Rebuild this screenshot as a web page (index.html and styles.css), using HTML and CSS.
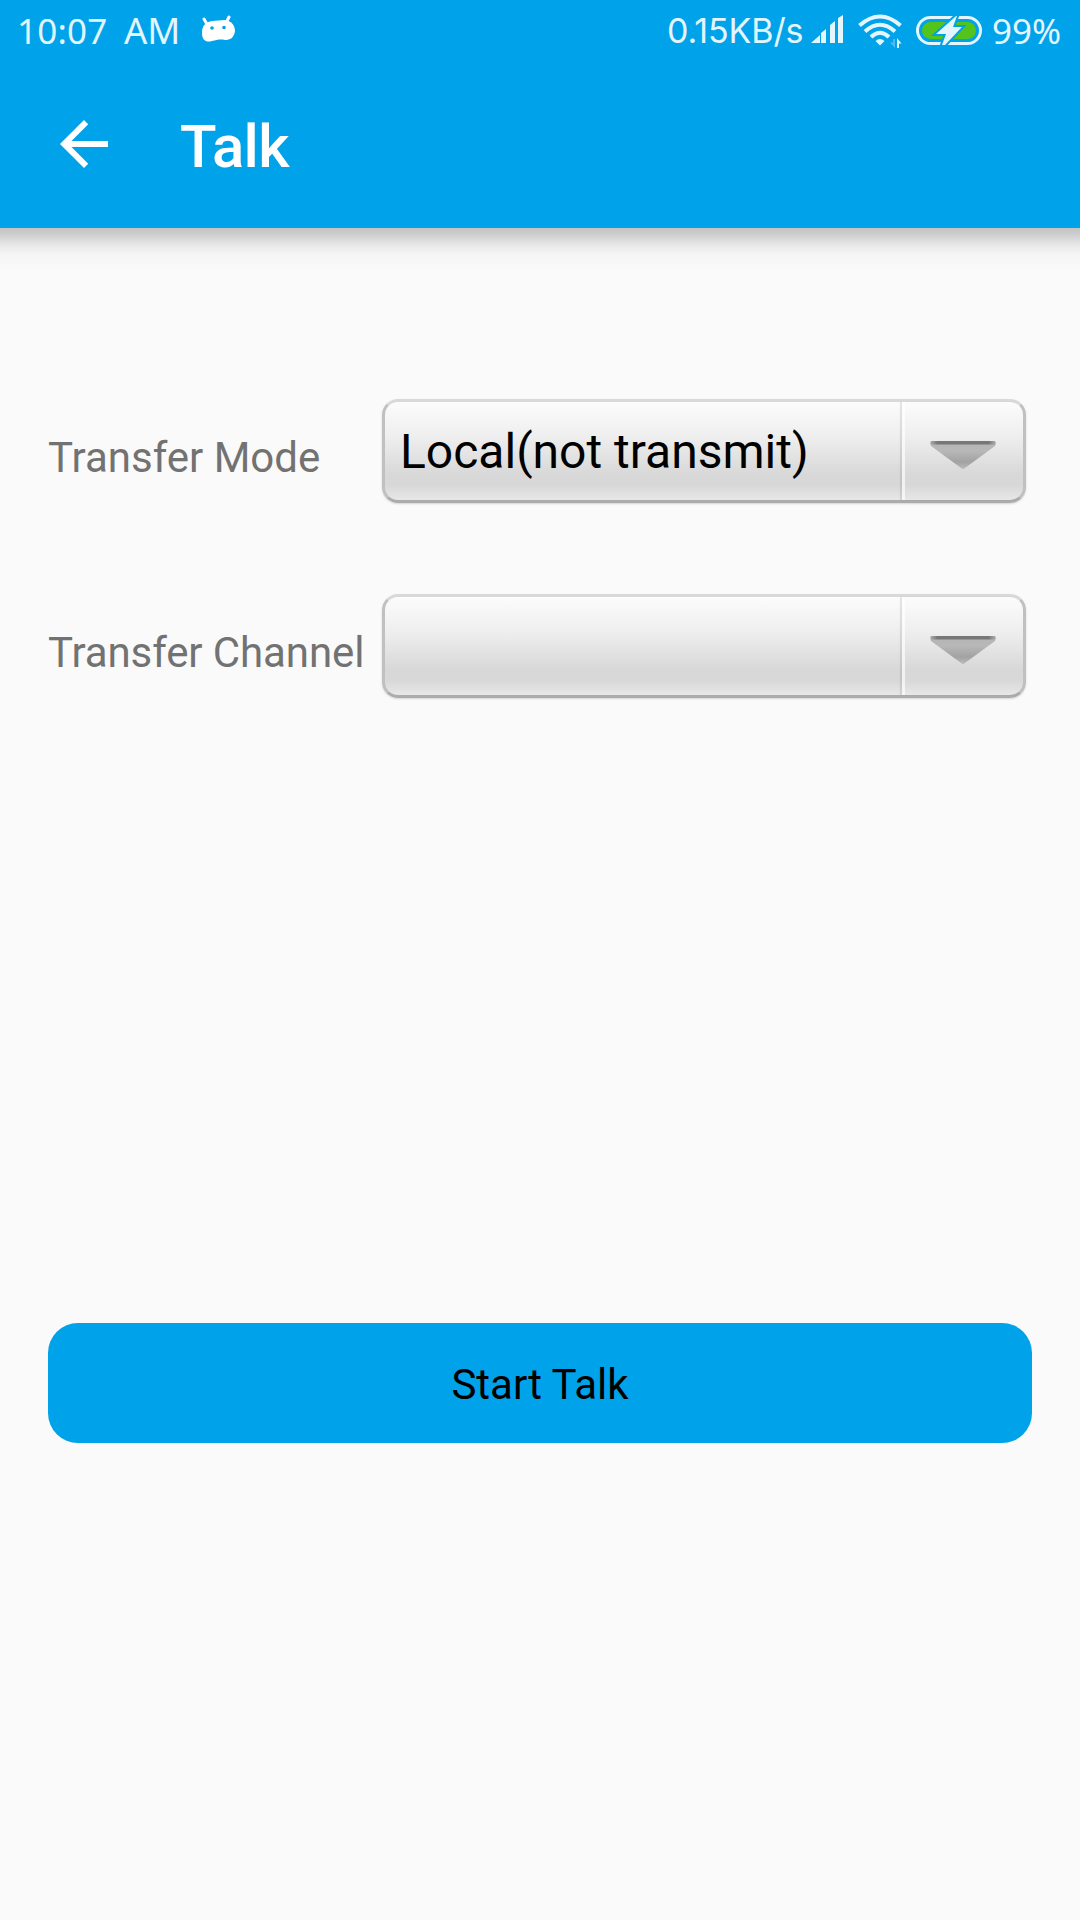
FILE: index.html
```html
<!DOCTYPE html>
<html lang="en">
<head>
<meta charset="utf-8">
<title>Talk</title>
<link rel="stylesheet" href="styles.css">
</head>
<body>
<header class="header">
  <div class="status">
    <span class="time">10:07</span>
    <span class="ampm">AM</span>
    <svg class="android" width="36" height="28" viewBox="0 0 36 28">
      <path d="M4 4l4 7M29 2l-3 6" stroke="#fff" stroke-width="3" stroke-linecap="round"/>
      <path d="M2 18C2 10 6 7 12 6L25 5C32 6 35 11 35 16C34 23 30 25 25 25C20 24 17 25 12 26C6 28 2 25 2 18Z" fill="#fff"/>
      <circle cx="12" cy="13" r="1.8" fill="#00a2e9"/><circle cx="24" cy="12.500" r="1.800" fill="#00a2e9"/>
    </svg>
    <span class="speed">0.15KB/s</span>
    <svg class="signal" width="33" height="29" viewBox="0 0 33 29">
      <path d="M0 28L9 20V28ZM10 28V18L15 14V28ZM19 28V10L24 6V28ZM27 28V3L32 0V28Z" fill="#e3f5fd"/>
    </svg>
    <svg class="wifi" width="44" height="36" viewBox="0 0 44 36">
      <g fill="none" stroke="#e3f5fd" stroke-width="4">
        <path d="M1.500 11.500Q22-6.500 42.500 11.500"/><path d="M7 17.500Q22 4 37 17.500"/><path d="M13 23Q22 14.500 31 23"/>
      </g>
      <path d="M17.500 27Q22 23 26.500 27L22 31.500Z" fill="#e3f5fd"/>
      <path d="M37 25V34L32 28.500H35V25Z" fill="#4abdf0"/><path d="M39 34V24L43.500 29.500H41V34Z" fill="#e3f5fd"/>
    </svg>
    <svg class="battery" width="66" height="30" viewBox="0 0 66 30">
      <rect x="1.500" y="2.500" width="63" height="26" rx="13" fill="none" stroke="#e3f5fd" stroke-width="3"/>
      <rect x="6" y="7" width="54" height="17" rx="8.500" fill="#54c41c"/>
      <path d="M40 1L20 19H30L26 30H29L46 12H37L41 1Z" fill="#e3f5fd" stroke="#00a2e9" stroke-width="4" paint-order="stroke"/>
    </svg>
    <span class="percent">99%</span>
  </div>
  <div class="toolbar">
    <svg class="back" width="72" height="72" viewBox="0 0 24 24"><path d="M20 11H7.830l5.590-5.590L12 4l-8 8 8 8 1.410-1.410L7.830 13H20z" fill="#fff"/></svg>
    <h1 class="title">Talk</h1>
  </div>
</header>
<main class="content">
  <div class="row">
    <span class="label">Transfer Mode</span>
    <div class="spinner">
      <span class="value">Local(not transmit)</span>
      <span class="drop"><svg class="caret" width="68" height="30" viewBox="0 0 68 30"><use href="#caret"/></svg></span>
    </div>
  </div>
  <div class="row">
    <span class="label channel">Transfer Channel</span>
    <div class="spinner">
      <span class="value"></span>
      <span class="drop"><svg class="caret" width="68" height="30" viewBox="0 0 68 30">
        <defs>
          <linearGradient id="fill" x1="0" y1="0" x2="0" y2="1"><stop offset="0" stop-color="#b4b4b4"/><stop offset=".35" stop-color="#b8b8b8"/><stop offset=".75" stop-color="#a2a2a2"/><stop offset="1" stop-color="#bcbcbc"/></linearGradient>
          <linearGradient id="edge"><stop offset="0" stop-color="#a8a8a8"/><stop offset=".1" stop-color="#777"/><stop offset=".9" stop-color="#777"/><stop offset="1" stop-color="#a8a8a8"/></linearGradient>
          <g id="caret"><path d="M1 2Q1 0 4 0H64Q67 0 67 2L66 5L36 27Q34 29 32 27L2 5Z" fill="url(#fill)"/><path d="M2 0H66V3.500H2Z" fill="url(#edge)"/></g>
        </defs>
        <use href="#caret"/></svg></span>
    </div>
  </div>
  <button class="start">Start Talk</button>
</main>
</body>
</html>
```
FILE: styles.css
```css
* { box-sizing: border-box; }
body { margin: 0; width: 1080px; height: 1920px; background: #fafafa; font-family: Roboto, sans-serif; overflow: hidden; }
.header { position: relative; height: 228px; background: #00a2e9; }
.header::after { content: ""; position: absolute; top: 100%; left: 0; right: 0; height: 42px; background: linear-gradient(#c4c4c4 0, #cdcdcd 6px, #dedede 13px, #ebebeb 19px, #f5f5f5 26px, #fafafa 42px); }
.status { height: 60px; display: flex; align-items: flex-start; color: #e3f5fd; font-family: "Noto Sans", sans-serif; font-size: 35px; line-height: 62px; white-space: nowrap; }
.status svg { flex: none; }
.time { margin-left: 17px; width: 107px; letter-spacing: .2px; }
.ampm { width: 76px; font-size: 36.500px; line-height: 61px; }
.android { margin-top: 15px; }
.speed { margin-left: 431px; width: 144px; font-family: Inter, sans-serif; font-weight: 400; font-size: 34px; letter-spacing: -.1px; }
.signal { margin-top: 15px; }
.wifi { margin: 14px 0 0 14px; }
.battery { margin: 15px 0 0 14px; }
.percent { margin-left: 10px; line-height: 61px; }
.toolbar { height: 168px; display: flex; align-items: flex-start; }
.back { margin: 48px 0 0 48px; flex: none; }
.title { margin: 52px 0 0 60px; color: #fff; font-size: 60px; line-height: 70px; font-weight: 500; letter-spacing: -.7px; }
.content { padding: 171px 48px 0; }
.row { display: flex; height: 105px; margin-bottom: 90px; }
.label { width: 334px; padding-top: 13px; color: #727272; font-size: 42px; line-height: 92px; white-space: nowrap; }
.channel { letter-spacing: -.1px; }
.spinner { width: 644px; height: 104px; display: flex; border: 3px solid; border-color: #d9d9d9 #c0c0c0 #acacac; border-radius: 16px; background: linear-gradient(#fcfcfc 0%, #eee 36%, #d8d8d8 74%, #d8d8d8 85%, #e7e7e7 100%); box-shadow: 0 1px 2px rgba(0,0,0,.15); }
.value { width: 517px; padding-left: 15px; color: #000; font-size: 48px; line-height: 99px; white-space: nowrap; }
.drop { flex: 1; border-left: 3px solid rgba(255,255,255,.65); box-shadow: -2px 0 1px rgba(0,0,0,.09); }
.caret { display: block; margin: 39px 0 0 24px; }
.start { display: block; width: 984px; height: 120px; margin-top: 624px; padding: 0; border: 0; border-radius: 30px; background: #00a2e9; color: #000; font: 42px/124px Roboto, sans-serif; }
```
